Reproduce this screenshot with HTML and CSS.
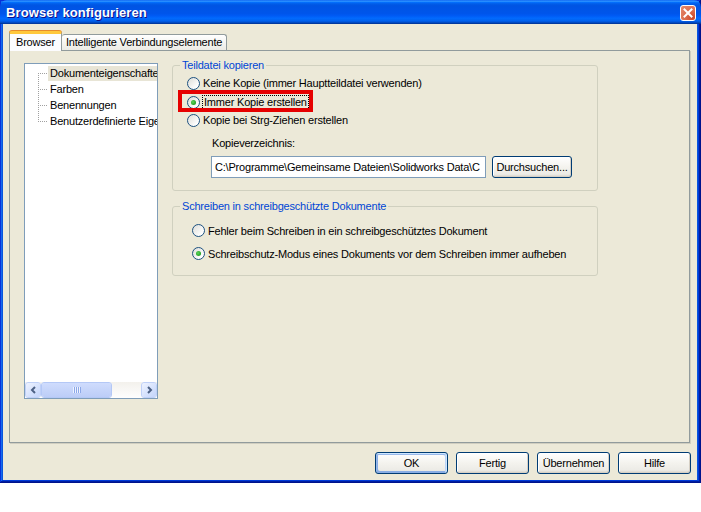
FILE: index.html
```html
<!DOCTYPE html>
<html lang="de">
<head>
  <meta charset="UTF-8">
  <title>Browser konfigurieren</title>
  <link rel="stylesheet" href="styles.css">
</head>
<body>
  <div class="window">
    <div class="titlebar">
      <span class="title">Browser konfigurieren</span>
      <span class="close"><svg width="10" height="10" viewBox="0 0 10 10"><path d="M1.5 1.5 L8.5 8.5 M8.5 1.5 L1.5 8.5" stroke="#fff" stroke-width="2" stroke-linecap="square"/></svg></span>
    </div>
    <div class="client">
      <div class="tabs">
        <div class="tab active">Browser</div>
        <div class="tab">Intelligente Verbindungselemente</div>
      </div>
      <div class="tabpage">
        <div class="tree">
          <ul class="tree-list">
            <li class="node first selected"><span class="branch"></span><span class="label">Dokumenteigenschaften</span></li>
            <li class="node"><span class="branch"></span><span class="label">Farben</span></li>
            <li class="node"><span class="branch"></span><span class="label">Benennungen</span></li>
            <li class="node last"><span class="branch"></span><span class="label">Benutzerdefinierte Eigenschaften</span></li>
          </ul>
          <div class="hscroll">
            <span class="sb-btn"><svg width="7" height="8" viewBox="0 0 7 8"><polyline points="5,1 2,4 5,7" fill="none" stroke="#4d6185" stroke-width="2"/></svg></span>
            <span class="sb-thumb"><span class="grip"></span></span>
            <span class="sb-track"></span>
            <span class="sb-btn"><svg width="7" height="8" viewBox="0 0 7 8"><polyline points="2,1 5,4 2,7" fill="none" stroke="#4d6185" stroke-width="2"/></svg></span>
          </div>
        </div>
        <div class="groups">
          <fieldset class="group">
            <legend>Teildatei kopieren</legend>
            <div class="group-body copy">
              <div class="radio"><span class="dot"></span>Keine Kopie (immer Hauptteildatei verwenden)</div>
              <div class="radio marked"><span class="dot checked"></span><span class="focus">Immer Kopie erstellen</span><span class="highlight"></span></div>
              <div class="radio"><span class="dot"></span>Kopie bei Strg-Ziehen erstellen</div>
              <div class="dir-label">Kopieverzeichnis:</div>
              <div class="dir-row">
                <div class="input">C:\Programme\Gemeinsame Dateien\Solidworks Data\C</div>
                <div class="btn browse">Durchsuchen...</div>
              </div>
            </div>
          </fieldset>
          <fieldset class="group">
            <legend>Schreiben in schreibgeschützte Dokumente</legend>
            <div class="group-body readonly">
              <div class="radio"><span class="dot"></span>Fehler beim Schreiben in ein schreibgeschütztes Dokument</div>
              <div class="radio"><span class="dot checked"></span>Schreibschutz-Modus eines Dokuments vor dem Schreiben immer aufheben</div>
            </div>
          </fieldset>
        </div>
      </div>
      <div class="buttons">
        <div class="btn default">OK</div>
        <div class="btn">Fertig</div>
        <div class="btn">Übernehmen</div>
        <div class="btn">Hilfe</div>
      </div>
    </div>
  </div>
</body>
</html>
```

FILE: styles.css
```css
body { margin: 0; background: #fff; font-family: "Liberation Sans", Arial, sans-serif; font-size: 11px; letter-spacing: -0.2px; color: #000; }
.window { width: 701px; height: 483px; display: flex; flex-direction: column; background: #0855dd; box-shadow: inset -1px -1px #00138c, inset 1px 1px #0831d9, inset -2px -2px #001ea0, inset 2px 2px #166aee, inset -3px -3px #003bda; }
.titlebar { height: 24px; display: flex; align-items: center; justify-content: space-between; border-radius: 7px 7px 0 0; background: linear-gradient(#0058ee 0%, #3593ff 4%, #288eff 6%, #127dff 8%, #036ffc 10%, #0262ee 14%, #0057e5 20%, #0054e3 24%, #0055eb 56%, #005bf5 66%, #026afe 76%, #0062ef 86%, #0052d6 92%, #0040ab 96%, #003092 100%); }
.title { padding-left: 6px; color: #fff; font-weight: bold; font-size: 13px; text-shadow: 1px 1px #0f1089; letter-spacing: 0.1px; }
.close { width: 16px; height: 16px; margin: 1px 5px 0 0; box-sizing: border-box; border: 1px solid #fff; border-radius: 3px; display: flex; align-items: center; justify-content: center; background: radial-gradient(circle at 85% 85%, #cc4628 0%, #dc6d4e 45%, #e48a6e 100%); }
.client { flex: 1; margin: 0 4px 3px 3px; background: #ece9d8; padding: 7px 7px 0 6px; display: flex; flex-direction: column; }

.tabs { display: flex; align-items: flex-end; height: 19px; padding-left: 1px; position: relative; z-index: 1; }
.tab { height: 16px; line-height: 15px; padding: 0 4px; box-sizing: border-box; border: 1px solid #919b9c; border-bottom: none; border-radius: 3px 3px 0 0; background: linear-gradient(#fff, #f3f3ef 60%, #ecebe5); margin-left: -1px; }
.tab.active { height: 20px; line-height: 17px; padding: 0 6px; margin-bottom: -1px; background: #fcfcfe; border-top: 3px solid #ffc83c; box-shadow: 0 -1px #e68b2c; }
.tab.active + .tab { margin-left: 0; border-left: none; }
.tabpage { height: 393px; box-sizing: border-box; border: 1px solid #919b9c; box-shadow: 1px 1px #d0cec0; background: #ece9d8; display: flex; align-items: flex-start; }

.tree { margin: 12px 0 0 14px; width: 134px; height: 336px; box-sizing: border-box; border: 1px solid #7f9db9; background: #fff; display: flex; flex-direction: column; overflow: hidden; }
.tree-list { flex: 1; list-style: none; margin: 0; padding: 1px 0 0 13px; }
.node { display: flex; height: 16px; align-items: center; white-space: nowrap; }
.branch { width: 10px; height: 16px; flex: none; background: repeating-linear-gradient(to right, #a0a0a0 0 1px, transparent 1px 2px) 0 8px / 10px 1px no-repeat, repeating-linear-gradient(#a0a0a0 0 1px, transparent 1px 2px) 0 0 / 1px 100% no-repeat; }
.node.first .branch { background: repeating-linear-gradient(to right, #a0a0a0 0 1px, transparent 1px 2px) 0 8px / 10px 1px no-repeat, repeating-linear-gradient(#a0a0a0 0 1px, transparent 1px 2px) 0 8px / 1px 8px no-repeat; }
.node.last .branch { background: repeating-linear-gradient(to right, #a0a0a0 0 1px, transparent 1px 2px) 0 8px / 10px 1px no-repeat, repeating-linear-gradient(#a0a0a0 0 1px, transparent 1px 2px) 0 0 / 1px 9px no-repeat; }
.label { padding: 0 2px; line-height: 15px; flex: 1; }
.node.selected .label { background: #e8e5d6; }

.hscroll { height: 16px; flex: none; display: flex; background: linear-gradient(#f3f1ec, #fefefe); }
.sb-btn { width: 16px; height: 16px; box-sizing: border-box; border: 1px solid #fff; border-radius: 3px; background: linear-gradient(135deg, #eef3ff, #c3d4fb); display: flex; align-items: center; justify-content: center; outline: 1px solid #bfd0f8; outline-offset: -1px; }
.sb-thumb { width: 71px; height: 16px; box-sizing: border-box; border: 1px solid #fff; border-radius: 3px; background: linear-gradient(#cfdcfd, #bccdf7); outline: 1px solid #b4c8f6; outline-offset: -1px; display: flex; align-items: center; justify-content: center; }
.grip { width: 8px; height: 6px; background: repeating-linear-gradient(to right, #eef3ff 0 1px, #8ca8e8 1px 2px); }
.sb-track { flex: 1; }

.groups { margin: 7px 0 0 14px; width: 426px; display: flex; flex-direction: column; gap: 8px; }
.group { margin: 0; padding: 0; border: 1px solid #d0d0bf; border-radius: 3px; min-width: 0; }
.group legend { margin-left: 7px; padding: 0 2px; color: #0046d5; line-height: 14px; }
.copy { padding: 2px 0 12px 14px; }
.readonly { padding: 6px 0 10px 19px; }
.radio { height: 18px; display: flex; align-items: center; gap: 3px; white-space: nowrap; position: relative; }
.readonly .radio { height: 23px; }
.radio.marked { margin-top: 1px; }
.dot { width: 13px; height: 13px; box-sizing: border-box; border: 1px solid #1c5180; border-radius: 50%; background: linear-gradient(135deg, #dcdcd7, #fff 80%); display: flex; align-items: center; justify-content: center; flex: none; }
.dot.checked::after { content: ""; width: 5px; height: 5px; border-radius: 50%; background: radial-gradient(circle at 40% 40%, #5ed35e, #21a121 70%, #1a7e1a); }
.focus { border: 1px dotted #000; padding: 0 1px; line-height: 13px; margin-left: -1px; }
.highlight { position: absolute; left: -9px; top: -3px; width: 135px; height: 22px; box-sizing: border-box; border: 4px solid #e60000; }
.dir-label { margin: 7px 0 0 25px; line-height: 14px; }
.dir-row { display: flex; gap: 6px; margin: 6px 0 0 24px; }
.input { width: 275px; height: 22px; box-sizing: border-box; border: 1px solid #7f9db9; background: #fff; padding-left: 3px; line-height: 20px; white-space: nowrap; overflow: hidden; }

.btn { height: 22px; box-sizing: border-box; border: 1px solid #003c74; border-radius: 3px; background: linear-gradient(#fff, #f4f3ee 50%, #ecebe6 86%, #d6d0c5); display: flex; align-items: center; justify-content: center; box-shadow: inset -1px -1px #d6d0c5, inset 1px 1px #fff; }
.browse { width: 80px; }
.buttons { display: flex; justify-content: flex-end; gap: 8px; margin: 9px -1px 0 0; }
.buttons .btn { width: 73px; }
.btn.default { box-shadow: inset -1px 1px #cee7ff, inset 1px 2px #98b8ea, inset -2px 2px #bcd4f6, inset 1px -1px #89ade4, inset 2px -2px #89ade4; }
```
